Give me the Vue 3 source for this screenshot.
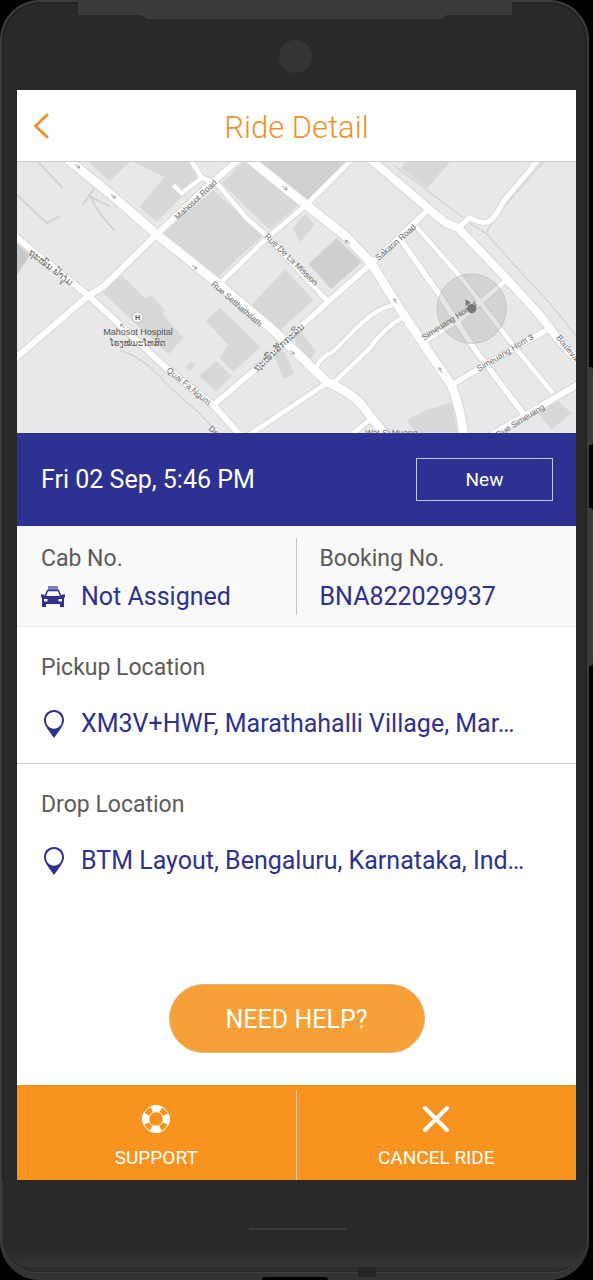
<template>
	<div class="stage">
		<main class="phone">
			<div class="bezel-top">
				<span class="earpiece"></span>
				<span class="earpiece-lip"></span>
				<span class="camera"></span>
			</div>

			<section class="screen">
				<header class="header">
					<button type="button" class="back" aria-label="Back">
						<svg viewBox="0 0 16 26" width="16" height="26">
							<path d="M14 2 2.5 13 14 24" fill="none" stroke="currentColor" stroke-width="3" stroke-linecap="round" stroke-linejoin="round" />
						</svg>
					</button>
					<h1>Ride Detail</h1>
				</header>

				<svg class="map" viewBox="51 21 1677 813">
					<rect x="51" y="21" width="1677" height="813" fill="#e8e8e8" />
					<polygon
						v-for="(block, i) in blocks"
						:key="'block' + i"
						:points="block.points"
						:fill="block.fill || '#d8d8d8'"
					/>
					<path
						v-for="(line, i) in thinLines"
						:key="'thin' + i"
						:d="line.d"
						:stroke-width="line.width"
						class="thin"
					/>
					<path
						v-for="(road, i) in roads"
						:key="'edge' + i"
						:d="road.d"
						:stroke-width="road.width + 6"
						class="edge"
					/>
					<path
						v-for="(road, i) in roads"
						:key="'road' + i"
						:d="road.d"
						:stroke-width="road.width"
						class="road"
					/>
					<path
						v-for="(arrow, i) in arrows"
						:key="'arrow' + i"
						:transform="`translate(${arrow[0]} ${arrow[1]}) rotate(${arrow[2]})`"
						d="M-9 0H7M1-5 8 0 1 5"
						class="arrow"
					/>
					<circle cx="1415" cy="461" r="104" fill="#888" fill-opacity=".2" stroke="#c4c4c4" stroke-width="3" />
					<text
						v-for="(label, i) in labels"
						:key="'label' + i"
						:transform="`translate(${label.x} ${label.y}) rotate(${label.angle})`"
						class="label"
						:class="{ 'label-lao': label.lao }"
					>{{ label.text }}</text>
					<circle cx="413" cy="487" r="16" fill="#f7f7f7" stroke="#aaa" stroke-width="2" />
					<text x="413" y="495" class="place mark">H</text>
					<text x="414" y="539" class="place">Mahosot Hospital</text>
					<text x="413" y="574" class="place lao">ໂຮງໝໍມະໂຫສົດ</text>
					<circle cx="1415" cy="461" r="14" fill="#777" />
					<path d="M1396 433 1413 443 1397 453Z" fill="#777" />
				</svg>

				<div class="schedule">
					<time>Fri 02 Sep, 5:46 PM</time>
					<button type="button" class="status">New</button>
				</div>

				<div class="info">
					<div class="info-col">
						<h2>Cab No.</h2>
						<p class="value">
							<svg viewBox="0 0 24 22" width="24" height="22">
								<path d="M7 0h10v4H7z" fill="#7c80c0" />
								<path d="M4 11 6.500 4.500h11L20 11" fill="none" stroke="currentColor" stroke-width="1.500" />
								<path
									fill="currentColor"
									fill-rule="evenodd"
									d="M0 8.500h3L4 10h16l1-1.500h3V11l-1 1v9h-4v-3H5v3H1v-9l-1-1zM3 13v2.500h3.500V13zm14.500 0v2.500H21V13z"
								/>
							</svg>
							Not Assigned
						</p>
					</div>
					<div class="info-col">
						<h2>Booking No.</h2>
						<p class="value">BNA822029937</p>
					</div>
				</div>

				<div v-for="place in places" :key="place.title" class="location">
					<h2>{{ place.title }}</h2>
					<p class="value">
						<svg viewBox="0 0 24 30" width="24" height="30">
							<path
								fill="currentColor"
								fill-rule="evenodd"
								d="M13 1C7.300 1 3 5.300 3 11c0 3 1.400 5.600 3.200 8.500L13 29l6.800-9.500C21.600 16.600 23 14 23 11c0-5.700-4.300-10-10-10zm0 2c4.600 0 8 3.700 8 8.300 0 4.500-3.400 8.500-8 8.500s-8-4-8-8.500C5 6.700 8.400 3 13 3z"
							/>
						</svg>
						{{ place.address }}
					</p>
				</div>

				<button type="button" class="help">NEED HELP?</button>

				<footer class="actions">
					<button type="button">
						<svg viewBox="0 0 28 30" width="28" height="30">
							<circle cx="14" cy="15" r="13.400" fill="none" stroke="currentColor" stroke-width="1" />
							<circle cx="14" cy="15" r="7.400" fill="none" stroke="currentColor" stroke-width="1" />
							<circle
								cx="14"
								cy="15"
								r="10.500"
								fill="none"
								stroke="currentColor"
								stroke-width="7"
								stroke-dasharray="9.500 6.990"
								stroke-dashoffset="4.750"
							/>
						</svg>
						SUPPORT
					</button>
					<button type="button">
						<svg viewBox="0 0 28 30" width="28" height="30">
							<path d="M3 4 25 26M25 4 3 26" fill="none" stroke="currentColor" stroke-width="4" stroke-linecap="round" />
						</svg>
						CANCEL RIDE
					</button>
				</footer>
			</section>

			<div class="bezel-bottom">
				<span class="chin"></span>
				<span class="home-line"></span>
				<span class="mic"></span>
				<span class="port"></span>
			</div>
		</main>
		<span class="side-key power"></span>
		<span class="side-key volume"></span>
	</div>
</template>

<script setup>
	import { ref } from "vue";

	const places = ref([
		{
			title: "Pickup Location",
			address: "XM3V+HWF, Marathahalli Village, Mar…",
		},
		{
			title: "Drop Location",
			address: "BTM Layout, Bengaluru, Karnataka, Ind…",
		},
	]);

	const blocks = [
		{ points: "265,21 390,21 328,78" },
		{ points: "400,21 580,21 590,80 470,200 418,155 495,66" },
		{ points: "490,235 640,105 790,240 655,365" },
		{ points: "665,85 730,21 760,21 895,150 810,225" },
		{ points: "770,21 1040,21 919,140", fill: "#d0d0d0" },
		{ points: "51,266 90,300 51,360", fill: "#c8c8c8" },
		{ points: "305,410 365,362 435,430 455,422 495,465 488,478 550,548 505,597" },
		{ points: "618,498 660,458 782,577 700,650 658,608 685,570" },
		{ points: "598,662 648,618 696,663 648,710" },
		{ points: "556,636 573,619 586,631 569,649" },
		{ points: "755,450 855,342 940,435 830,535" },
		{ points: "820,598 850,585 884,655 852,671" },
		{ points: "879,220 915,177 945,208 900,262" },
		{ points: "926,327 1010,250 1085,322 993,402", fill: "#cfcfcf" },
		{ points: "879,540 895,520 948,590 930,612 900,600" },
		{ points: "1203,38 1215,21 1350,21 1280,101" },
		{ points: "1220,795 1280,765 1356,742 1372,834 1250,834" },
		{ points: "1610,770 1665,730 1714,775 1655,824" },
	];

	const thinLines = [
		{ d: "M115 21 188 99M51 120 140 204 180 184M285 98 248 150M270 125 330 155M275 130Q290 170 345 227", width: 6 },
		{ d: "M360 585Q430 610 480 665T600 775L635 815", width: 4 },
		{ d: "M1180 30 1260 90 1390 188M1410 205 1458 235 1580 370 1650 445 1739 555", width: 4 },
		{ d: "M1630 21 1500 170 1458 232", width: 4 },
	];

	const roads = [
		{ d: "M520 90 545 115 605 68", width: 12 },
		{ d: "M570 10 605 68 655 90 740 190 800 242 979 435", width: 14 },
		{ d: "M660 385 800 250 919 150 1059 10", width: 14 },
		{ d: "M949 640Q955 610 1000 590L1079 510Q1130 460 1189 447", width: 12 },
		{ d: "M999 685 1109 580Q1160 510 1212 487", width: 13 },
		{ d: "M740 845 979 685M1049 845 1105 798", width: 14 },
		{ d: "M1199 250 1319 420 1429 590 1569 775", width: 16 },
		{ d: "M1249 215 1389 375 1539 570 1659 715", width: 13 },
		{ d: "M1269 560 1379 495 1519 375", width: 14 },
		{ d: "M1354 690 1489 610 1649 520", width: 16 },
		{ d: "M1459 850 1569 785 1739 685", width: 18 },
		{ d: "M1380 215 1409 188Q1445 208 1465 200T1510 140L1614 15", width: 15 },
		{ d: "M720 10 600 115 470 238 310 395 265 422 40 615", width: 18 },
		{ d: "M640 750 770 640 890 525 1114 325 1284 165", width: 16 },
		{ d: "M40 240 265 422 430 575 500 640 640 750 725 845", width: 18 },
		{ d: "M200 10 340 125 470 238 660 390 830 535 979 680Q1060 715 1089 755L1160 845", width: 26 },
		{ d: "M745 10 919 150 1039 245 1114 325 1189 445 1279 580 1354 690Q1385 770 1391 845", width: 26 },
		{ d: "M1109 10 1284 160 1339 205 1374 218 1519 370 1619 480 1669 545 1739 625", width: 24 },
	];

	const arrows = [
		[233, 34, 40],
		[340, 124, 40],
		[584, 337, 40],
		[877, 592, 40],
		[855, 99, 40],
		[1042, 261, 220],
		[1186, 438, 240],
		[1321, 645, 240],
		[367, 513, 220],
	];

	const labels = [
		{ text: "Mahosot Road", x: 533, y: 196, angle: -43 },
		{ text: "Rue De La Mission", x: 792, y: 246, angle: 44 },
		{ text: "Rue Setthathilath", x: 632, y: 390, angle: 41 },
		{ text: "Quai Fa Ngum", x: 498, y: 649, angle: 39 },
		{ text: "De", x: 624, y: 823, angle: 42 },
		{ text: "Sakarin Road", x: 1135, y: 318, angle: -41 },
		{ text: "Simeuang Hom 4", x: 1272, y: 557, angle: -33 },
		{ text: "Simeuang Hom 3", x: 1437, y: 650, angle: -31 },
		{ text: "Rue Simeuang", x: 1495, y: 848, angle: -32 },
		{ text: "Boulevard", x: 1667, y: 548, angle: 51 },
		{ text: "Wat Si Muang", x: 1096, y: 842, angle: 0 },
		{ text: "ຖະໜົນ ຟ້າງຸ່ມ", x: 84, y: 297, angle: 37, lao: true },
		{ text: "ຖະໜົນສັກກະລິນ", x: 772, y: 650, angle: -43, lao: true },
	];
</script>

<style>
	body {
		margin: 0;
		background: #000;
	}
</style>

<style scoped>
	.stage {
		position: relative;
		padding-right: 4px;
		background: #000;
		font-family: Roboto, "Liberation Sans", sans-serif;
	}

	.phone {
		box-sizing: border-box;
		min-height: 100vh;
		padding: 0 13px 0 17px;
		display: flex;
		flex-direction: column;
		overflow: hidden;
		border-radius: 40px;
		background: #292929;
		box-shadow: inset 0 0 0 2px #3c3c3c, inset 0 0 0 4px #222;
	}

	.bezel-top {
		position: relative;
		height: 90px;
		flex: none;
	}
	.earpiece {
		position: absolute;
		top: 0;
		left: 61px;
		right: 64px;
		height: 15px;
		background: #3b3b3b;
	}
	.earpiece-lip {
		position: absolute;
		top: 15px;
		left: 124px;
		right: 129px;
		height: 4px;
		background: #3b3b3b;
		clip-path: polygon(0 0, 100% 0, 98% 100%, 2% 100%);
	}
	.camera {
		position: absolute;
		top: 40px;
		left: calc(50% - 18px);
		width: 33px;
		height: 33px;
		border-radius: 50%;
		background: #343434;
	}

	.screen {
		flex: 1;
		display: flex;
		flex-direction: column;
		background: #fff;
	}

	.header {
		position: relative;
		height: 71px;
		display: flex;
		align-items: center;
		justify-content: center;
		border-bottom: 1px solid #ccc;
		color: #f0922b;
	}
	.back {
		position: absolute;
		left: 16px;
		top: 23px;
		height: 26px;
		padding: 0;
		border: 0;
		background: none;
		color: inherit;
		cursor: pointer;
	}
	h1 {
		margin: 4px 0 0;
		font-size: 31px;
		line-height: 36px;
		font-weight: 300;
	}

	.map {
		display: block;
		width: 100%;
		height: auto;
	}
	.thin,
	.edge,
	.road {
		fill: none;
		stroke-linejoin: round;
	}
	.thin {
		stroke: #d2d2d2;
	}
	.edge {
		stroke: #d8d8d8;
	}
	.road {
		stroke: #fff;
	}
	.arrow {
		fill: none;
		stroke: #aaa;
		stroke-width: 3;
	}
	.label,
	.place {
		font-family: "Liberation Sans", "DejaVu Sans", sans-serif;
		font-size: 25px;
		fill: #6c6c6c;
	}
	.label-lao {
		font-size: 28px;
	}
	.place {
		font-size: 27px;
		fill: #555;
		text-anchor: middle;
	}
	.mark {
		font-size: 22px;
		font-weight: bold;
	}
	.lao {
		font-size: 25px;
	}

	.schedule {
		padding: 25px 23px 25px 24px;
		display: flex;
		align-items: center;
		justify-content: space-between;
		background: #2d3192;
		color: #fff;
		font-size: 25px;
		line-height: 30px;
	}
	.status {
		width: 137px;
		height: 43px;
		padding: 0;
		border: 1px solid #c5c6e3;
		background: none;
		color: #fff;
		font-family: inherit;
		font-size: 19px;
	}

	.info {
		padding: 12px 0 11px;
		display: grid;
		grid-template-columns: 1fr 1fr;
		border-bottom: 1px solid #e8e8e8;
		background: #f9f9f9;
	}
	.info-col {
		padding: 6px 24px 3px;
	}
	.info-col:first-child {
		padding-right: 0;
		border-right: 1px solid #c4c4c4;
	}
	.info-col + .info-col {
		padding-left: 23px;
	}
	h2 {
		margin: 0;
		color: #5b5b5b;
		font-size: 23px;
		line-height: 30px;
		font-weight: 400;
	}
	.value {
		margin: 0;
		display: flex;
		align-items: center;
		gap: 16px;
		color: #2d3192;
		font-size: 25px;
		line-height: 30px;
		white-space: nowrap;
	}
	.info .value {
		margin-top: 8px;
	}

	.location {
		padding: 26px 24px 24px;
	}
	.location + .location {
		border-top: 1px solid #ccc;
	}
	.location .value {
		margin-top: 26px;
	}

	.help {
		width: 256px;
		height: 69px;
		padding: 2px 0 0;
		margin: auto auto 32px;
		border: 1px solid #e3b27b;
		border-radius: 35px;
		background: #f99f37;
		color: #fff;
		font-family: inherit;
		font-size: 25px;
		cursor: pointer;
	}

	.actions {
		padding-top: 5px;
		display: grid;
		grid-template-columns: 1fr 1fr;
		background: #f8931f;
	}
	.actions button {
		height: 90px;
		padding: 2px 0 0;
		display: flex;
		flex-direction: column;
		align-items: center;
		justify-content: center;
		gap: 12px;
		border: 0;
		background: none;
		color: #fff;
		font-family: inherit;
		font-size: 19px;
		cursor: pointer;
	}
	.actions button:first-child {
		border-right: 1px solid #fbd09a;
	}

	.bezel-bottom {
		position: relative;
		height: 100px;
		margin: 0 -11px 0 -15px;
		flex: none;
		background: #333;
	}
	.chin {
		position: absolute;
		inset: 0 0 8px 1px;
		border-radius: 0 0 34px 34px;
		background: linear-gradient(#292929 74%, #343434 93%, #2c2c2c 96%, #333);
		box-shadow: 0 1px 0 #414141, inset 1px -1px 0 #272727;
	}
	.home-line {
		position: absolute;
		top: 48px;
		left: calc(50% - 46px);
		width: 98px;
		height: 2px;
		background: #3a3a3a;
	}
	.mic {
		position: absolute;
		right: 211px;
		bottom: 3px;
		width: 18px;
		height: 10px;
		background: #242424;
	}
	.port {
		position: absolute;
		left: 260px;
		bottom: 0;
		width: 66px;
		height: 3px;
		border-radius: 6px 6px 0 0;
		background: #000;
	}

	.side-key {
		position: absolute;
		right: 0;
		width: 4px;
		border-radius: 0 3px 3px 0;
		background: #3c3c3c;
	}
	.power {
		top: 367px;
		height: 78px;
	}
	.volume {
		top: 508px;
		height: 158px;
	}
</style>
